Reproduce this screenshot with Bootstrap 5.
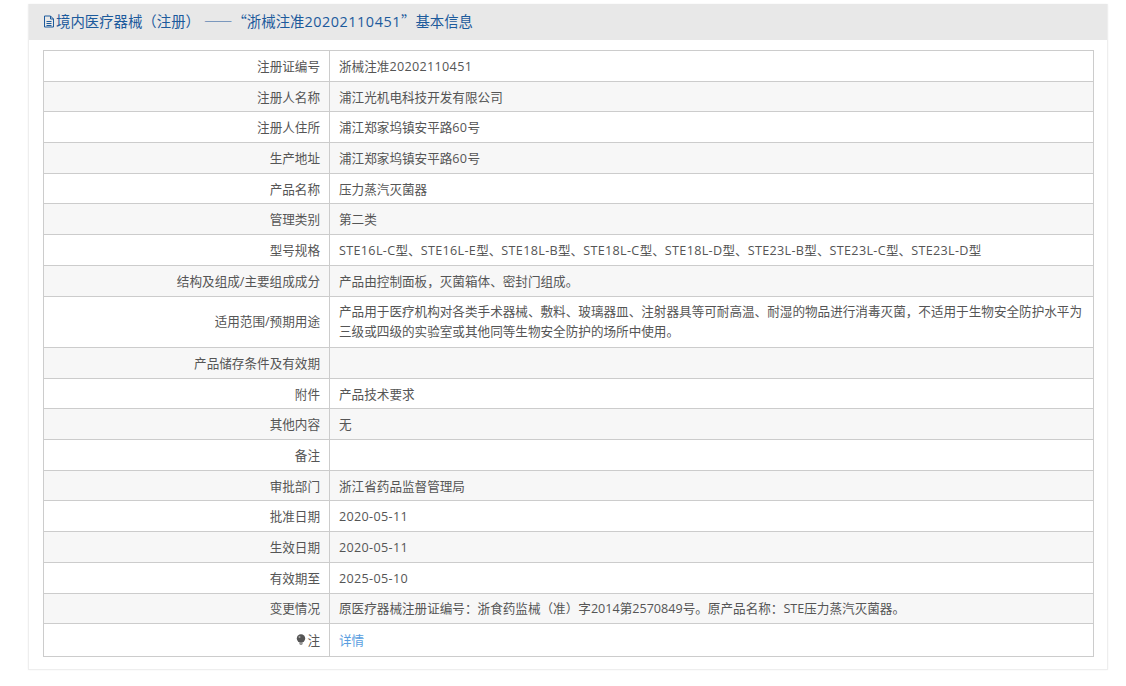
<!DOCTYPE html>
<html lang="zh">
<head>
<meta charset="utf-8">
<title>基本信息</title>
<link href="https://cdn.jsdelivr.net/npm/bootstrap@5.3.0/dist/css/bootstrap.min.css" rel="stylesheet">
<style>
html,body{height:100%;overflow:hidden}
body{background:#fff;font-family:"Open Sans","Noto Sans CJK SC",sans-serif;color:#555;font-size:12.6px}
.sheet{margin:4px 18px 0 28px;border:1px solid #eee;border-top:0;height:666px;box-shadow:0 0 2px rgba(0,0,0,.05)}
.sheet-head{background:#e8e8e8;height:36px;padding:0 14px 2px;display:flex;align-items:center;color:#1c5a9c;font-size:14.4px;gap:1px}
.cjk-run{font-family:"Noto Sans CJK SC",sans-serif}
.num-run{letter-spacing:.33px}
.head-num{letter-spacing:.55px}
.sheet-body{padding:10px 13px 0 14px}
.info-table{--bs-table-bg:transparent;--bs-table-color:#555;width:100%;margin:0;border:1.5px solid #ccc;border-collapse:collapse;table-layout:fixed;font-size:12.6px;line-height:20px}
.info-table td{border:1px solid #ccc;padding:2px 5px 0 9px;height:30.7px;vertical-align:middle}
.info-table tr:nth-child(even) td{--bs-table-bg:#f7f7f7}
.info-table td:first-child{width:286px;text-align:right;padding-right:9px;padding-left:9px}
.info-table tr.tall td{height:51.5px;padding-top:1px}
.info-table tr:last-child td{height:33px;padding-top:2px}
.info-link{color:#5a9ee0;text-decoration:none}
.note-ico{vertical-align:-1px;margin-right:1px}
</style>
</head>
<body>
<div class="sheet">
  <div class="sheet-head">
    <svg width="12" height="13" viewBox="0 0 12 13" fill="none" stroke="#1c5a9c" stroke-width="1"><path d="M1.5 1h6l3 3v8h-9z"/><path d="M7.5 1v3h3M3.500 6.500h5M3.500 8.500h5M3.500 10.500h5"/></svg>
    <span>境内医疗器械（注册） <span class="cjk-run">——“</span>浙械注准<span class="head-num">20202110451</span><span class="cjk-run">”</span>基本信息</span>
  </div>
  <div class="sheet-body">
    <table class="table info-table">
      <tbody>
        <tr><td>注册证编号</td><td>浙械注准<span class="num-run">20202110451</span></td></tr>
        <tr><td>注册人名称</td><td>浦江光机电科技开发有限公司</td></tr>
        <tr><td>注册人住所</td><td>浦江郑家坞镇安平路<span class="num-run">60</span>号</td></tr>
        <tr><td>生产地址</td><td>浦江郑家坞镇安平路<span class="num-run">60</span>号</td></tr>
        <tr><td>产品名称</td><td>压力蒸汽灭菌器</td></tr>
        <tr><td>管理类别</td><td>第二类</td></tr>
        <tr><td>型号规格</td><td><span class="num-run">STE16L-C</span>型、<span class="num-run">STE16L-E</span>型、<span class="num-run">STE18L-B</span>型、<span class="num-run">STE18L-C</span>型、<span class="num-run">STE18L-D</span>型、<span class="num-run">STE23L-B</span>型、<span class="num-run">STE23L-C</span>型、<span class="num-run">STE23L-D</span>型</td></tr>
        <tr><td>结构及组成/主要组成成分</td><td>产品由控制面板，灭菌箱体、密封门组成。</td></tr>
        <tr class="tall"><td>适用范围/预期用途</td><td>产品用于医疗机构对各类手术器械、敷料、玻璃器皿、注射器具等可耐高温、耐湿的物品进行消毒灭菌，不适用于生物安全防护水平为三级或四级的实验室或其他同等生物安全防护的场所中使用。</td></tr>
        <tr><td>产品储存条件及有效期</td><td></td></tr>
        <tr><td>附件</td><td>产品技术要求</td></tr>
        <tr><td>其他内容</td><td>无</td></tr>
        <tr><td>备注</td><td></td></tr>
        <tr><td>审批部门</td><td>浙江省药品监督管理局</td></tr>
        <tr><td>批准日期</td><td><span class="num-run">2020-05-11</span></td></tr>
        <tr><td>生效日期</td><td><span class="num-run">2020-05-11</span></td></tr>
        <tr><td>有效期至</td><td><span class="num-run">2025-05-10</span></td></tr>
        <tr><td>变更情况</td><td>原医疗器械注册证编号：浙食药监械（准）字2014第2570849号。原产品名称：STE压力蒸汽灭菌器。</td></tr>
        <tr><td><svg class="note-ico" width="10" height="12" viewBox="0 0 10 12"><circle cx="5" cy="4.500" r="4.200" fill="#555"/><path d="M3 9h4l-1 2H4z" fill="#999"/><circle cx="3.500" cy="3" r="1" fill="#aaa"/></svg>注</td><td><a class="info-link" href="#">详情</a></td></tr>
      </tbody>
    </table>
  </div>
</div>
<script src="https://cdn.jsdelivr.net/npm/bootstrap@5.3.0/dist/js/bootstrap.bundle.min.js"></script>
</body>
</html>
